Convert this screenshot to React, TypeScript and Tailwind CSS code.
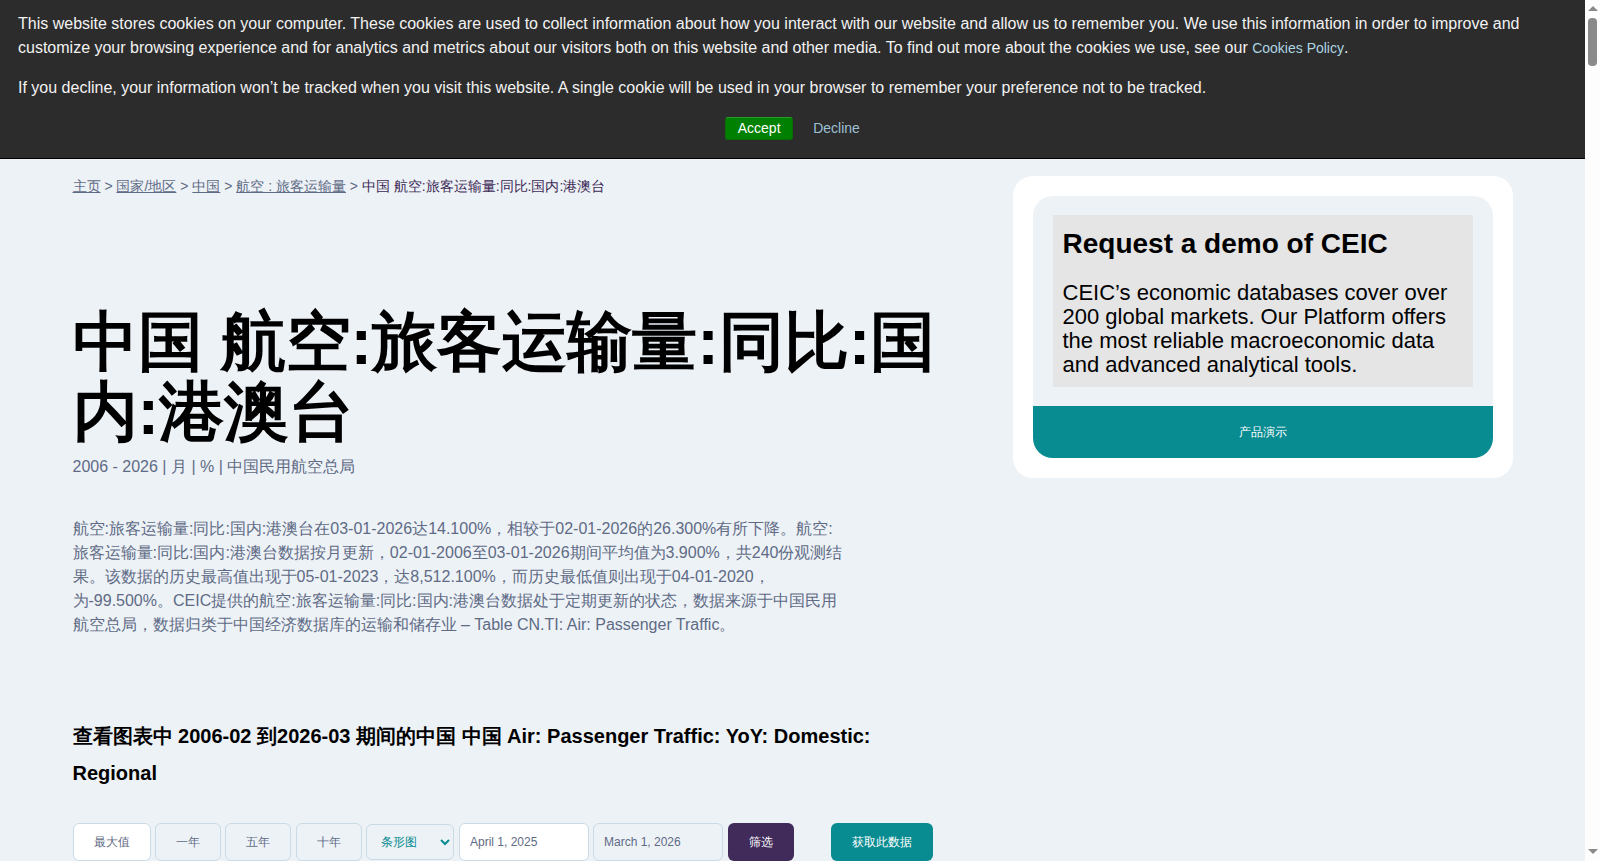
export default function App() {
  const ghost = "h-[38px] rounded-md border border-[#c9dbe5] text-[12px] text-[#5f6b85] flex items-center justify-center pt-[1px]";
  return (
    <div className='font-["Liberation_Sans",sans-serif] flex h-screen overflow-hidden bg-[#edf2f7] text-black'>
      <main className="relative flex-1 overflow-hidden">
        <div className='absolute top-0 left-0 right-0 z-10 h-[159px] bg-[#2c2c2c] border-b border-black text-[16px] leading-[24px] text-[#f2f2f2] px-[18px] pt-[12px]'>
          <p>This website stores cookies on your computer. These cookies are used to collect information about how you interact with our website and allow us to remember you. We use this information in order to improve and customize your browsing experience and for analytics and metrics about our visitors both on this website and other media. To find out more about the cookies we use, see our <span className="text-[14px] text-[#aed5e2]">Cookies Policy</span>.</p>
          <p className="mt-4">If you decline, your information won’t be tracked when you visit this website. A single cookie will be used in your browser to remember your preference not to be tracked.</p>
          <div className="mt-[16px] flex justify-center items-center gap-5 text-[14px]">
            <span className="bg-[#008000] rounded-[3px] border border-[#0a6b0a] border-t-[#2a9a2a] w-[68px] text-center h-[23px] leading-[21px] text-white">Accept</span>
            <span className="text-[#9cc0d4]">Decline</span>
          </div>
        </div>
        <div className="flex pt-[176px] pl-[72.5px]">
          <div className="w-[875px] shrink-0">
            <div className="text-[14px] leading-[21px] text-[#5f6b85]">
              <a className="underline">主页</a> &gt; <a className="underline">国家/地区</a> &gt; <a className="underline">中国</a> &gt; <a className="underline">航空 : 旅客运输量</a> &gt; <span className="text-[#3d2a56]">中国 航空:旅客运输量:同比:国内:港澳台</span>
            </div>
            <h1 className="mt-[110px] text-[65px] leading-[70.4px] font-bold">中国 航空:旅客运输量:同比:国内:港澳台</h1>
            <div className="mt-[7px] text-[16px] leading-[24px] text-[#5f6b85]">2006 - 2026 | 月 | % | 中国民用航空总局</div>
            <p className="mt-[38px] w-[775px] text-[16px] leading-[24px] text-[#5f6b85]">航空:旅客运输量:同比:国内:港澳台在03-01-2026达14.100%，相较于02-01-2026的26.300%有所下降。航空:旅客运输量:同比:国内:港澳台数据按月更新，02-01-2006至03-01-2026期间平均值为3.900%，共240份观测结果。该数据的历史最高值出现于05-01-2023，达8,512.100%，而历史最低值则出现于04-01-2020，为-99.500%。CEIC提供的航空:旅客运输量:同比:国内:港澳台数据处于定期更新的状态，数据来源于中国民用航空总局，数据归类于中国经济数据库的运输和储存业 – Table CN.TI: Air: Passenger Traffic。</p>
            <h2 className="mt-[81px] w-[861px] text-[20px] leading-[37.5px] font-bold">查看图表中 2006-02 到2026-03 期间的中国 中国 Air: Passenger Traffic: YoY: Domestic: Regional</h2>
            <div className="mt-[30px] flex items-start">
              <div className={`${ghost} w-[78.5px] bg-white`}>最大值</div>
              <div className={`${ghost} w-[66px] ml-1`}>一年</div>
              <div className={`${ghost} w-[66px] ml-1`}>五年</div>
              <div className={`${ghost} w-[66px] ml-[5px]`}>十年</div>
              <div className="ml-1 mt-[1px] h-[36px] w-[88px] rounded-md border border-[#c9dbe5] text-[12px] text-[#088c91] flex items-center justify-between pl-[14px] pr-[3px]">
                条形图
                <svg width="10" height="8" viewBox="0 0 10 8" fill="none" stroke="#088c91" strokeWidth="2"><path d="M1 2l4 4 4-4" /></svg>
              </div>
              <div className="ml-[5px] h-[38px] w-[130px] rounded-md border border-[#c9dbe5] bg-white text-[12px] text-[#5f6b85] flex items-center pl-[10px]">April 1, 2025</div>
              <div className="ml-1 h-[38px] w-[130px] rounded-md border border-[#c9dbe5] text-[12px] text-[#5f6b85] flex items-center pl-[10px]">March 1, 2026</div>
              <div className="ml-[5px] h-[38px] w-[66px] rounded-md bg-[#402b5b] text-[12px] text-white flex items-center justify-center pt-[1px]">筛选</div>
              <div className="ml-[37px] h-[38px] w-[102px] rounded-md bg-[#088c91] text-[12px] text-white flex items-center justify-center pt-[1px]">获取此数据</div>
            </div>
          </div>
          <aside className="ml-[65.5px] w-[500px] shrink-0">
            <div className="bg-white rounded-[20px] p-5">
              <div className="bg-[#edf2f7] rounded-[20px] overflow-hidden">
                <div className="px-5 pt-[19px] pb-[19px]">
                  <div className="bg-[#e5e5e5] pl-[9.5px] pr-[9px] pt-[11px] pb-[10px]">
                    <h3 className="text-[28px] leading-[36px] font-bold">Request a demo of CEIC</h3>
                    <p className="mt-[19px] text-[22px] leading-[24px]">CEIC’s economic databases cover over 200 global markets. Our Platform offers the most reliable macroeconomic data and advanced analytical tools.</p>
                  </div>
                </div>
                <div className="h-[52px] bg-[#088c91] text-white text-[12px] flex items-center justify-center">产品演示</div>
              </div>
            </div>
          </aside>
        </div>
      </main>
      <div className="w-[15px] shrink-0 bg-[#fdfdfd] flex flex-col items-center justify-between pt-[6px] pb-[7px]">
        <div className="w-full flex flex-col items-center">
          <div className="w-0 h-0 border-x-[5px] border-x-transparent border-b-[5px] border-b-[#8a8a8a]" />
          <div className="mt-[7px] w-[9px] h-[48px] rounded-[4px] bg-[#8a8a8a]" />
        </div>
        <div className="w-0 h-0 border-x-[5px] border-x-transparent border-t-[5px] border-t-[#8a8a8a]" />
      </div>
    </div>
  );
}
